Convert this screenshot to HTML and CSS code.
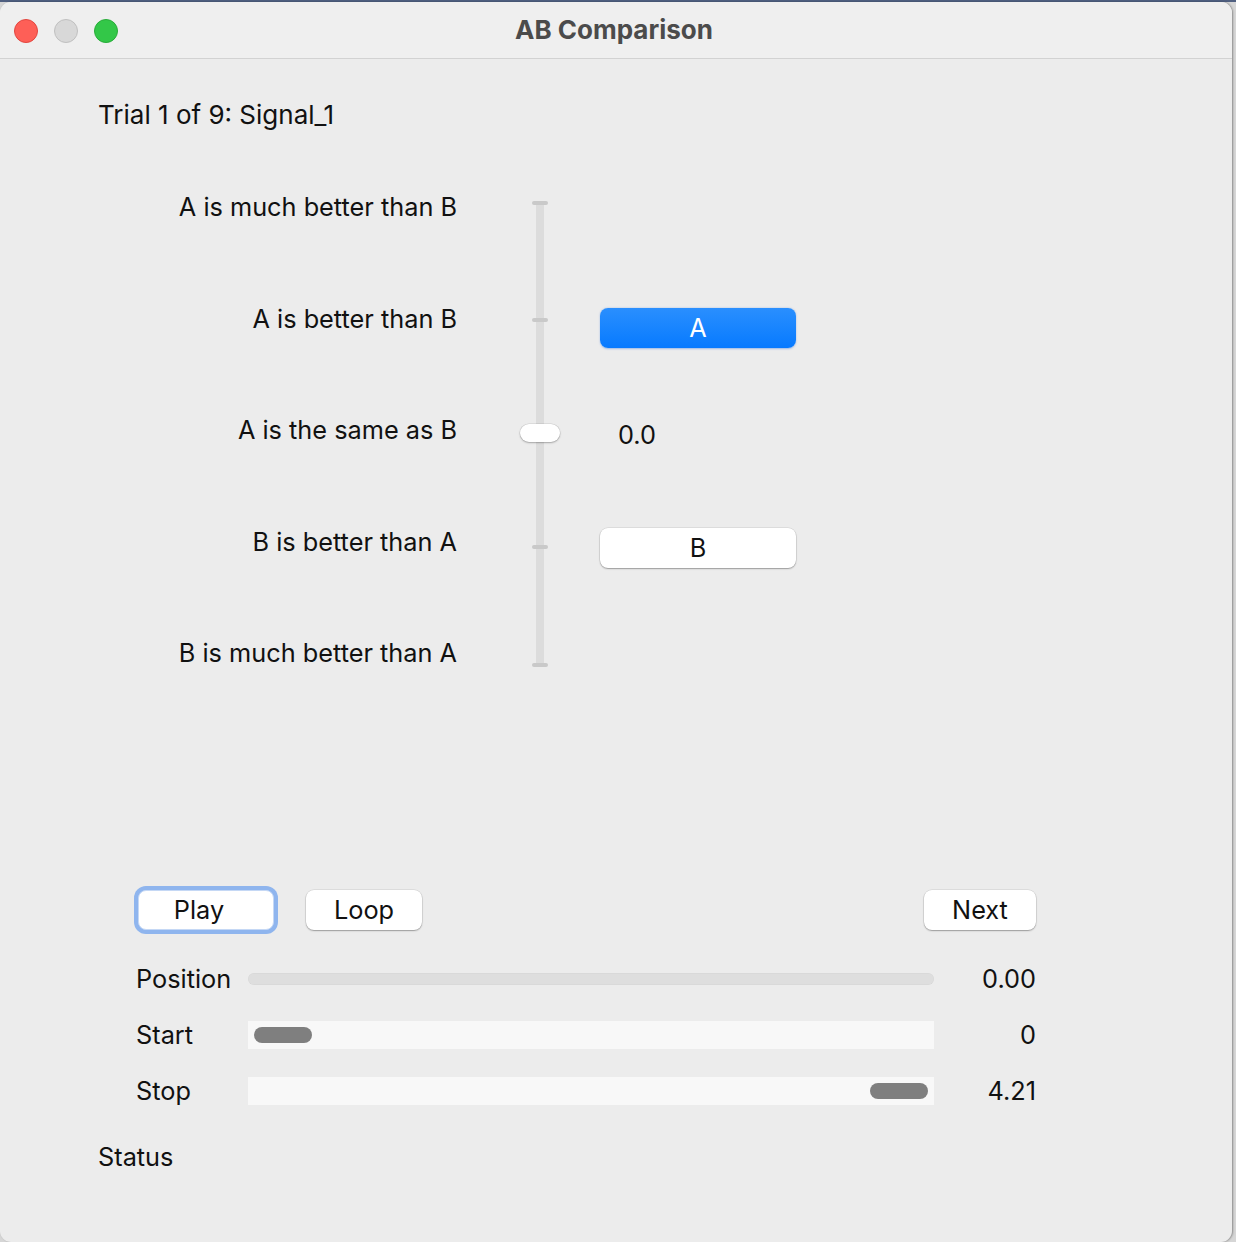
FILE: index.html
```html
<!DOCTYPE html>
<html>
<head>
<meta charset="utf-8">
<link rel="stylesheet" href="styles.css">
</head>
<body>
<div class="window">
  <div class="titlebar">
    <div class="lights">
      <span class="light red"></span>
      <span class="light gray"></span>
      <span class="light green"></span>
    </div>
    <div class="title">AB Comparison</div>
  </div>
  <div class="content">
    <div class="trial">Trial 1 of 9: Signal_1</div>
    <div class="scale">
      <div class="labels">
        <div class="label">A is much better than B</div>
        <div class="label">A is better than B</div>
        <div class="label">A is the same as B</div>
        <div class="label">B is better than A</div>
        <div class="label">B is much better than A</div>
      </div>
      <div class="vslider">
        <div class="track"></div>
        <span class="tick t0"></span>
        <span class="tick t1"></span>
        <span class="tick t2"></span>
        <span class="tick t3"></span>
        <span class="tick t4"></span>
        <span class="thumb"></span>
      </div>
      <div class="choices">
        <button class="btn btn-a">A</button>
        <div class="value">0.0</div>
        <button class="btn btn-b">B</button>
      </div>
    </div>
    <div class="controls">
      <div class="buttons">
        <div class="focus"><button class="btn small play">Play</button></div>
        <button class="btn small loop">Loop</button>
        <span class="spacer"></span>
        <button class="btn small next">Next</button>
      </div>
      <div class="sliders">
        <div class="slabel">Position</div>
        <div class="strack pos"></div>
        <div class="sval">0.00</div>

        <div class="slabel">Start</div>
        <div class="strack box"><span class="knob left"></span></div>
        <div class="sval">0</div>

        <div class="slabel">Stop</div>
        <div class="strack box end"><span class="knob right"></span></div>
        <div class="sval">4.21</div>
      </div>
    </div>
    <div class="status">Status</div>
  </div>
</div>
</body>
</html>
```
FILE: styles.css
```css
html, body {
  margin: 0;
  padding: 0;
}
body {
  width: 1236px;
  height: 1242px;
  overflow: hidden;
  background: linear-gradient(#4f5f80 0, #4f5f80 2px, #d6d6d6 2px);
  font-family: Inter, "Noto Sans", "Liberation Sans", sans-serif;
  color: #111;
}
.window {
  margin-top: 2px;
  width: 1232px;
  height: 1240px;
  background: #ececec;
  border-radius: 11px;
  box-shadow: 1px 0 2px rgba(0,0,0,0.35);
  overflow: hidden;
  display: flex;
  flex-direction: column;
}
.titlebar {
  height: 56px;
  flex: none;
  background: #efefef;
  border-bottom: 1px solid #d2d2d2;
  display: flex;
  align-items: center;
  position: relative;
}
.lights {
  display: flex;
  gap: 16px;
  padding-left: 14px;
  padding-top: 1px;
}
.light {
  width: 22px;
  height: 22px;
  border-radius: 50%;
  border: 1px solid transparent;
}
.light.red { background: #fe5f57; border-color: #e2463f; }
.light.gray { background: #d8d8d8; border-color: #c0c0c0; }
.light.green { background: #33c748; border-color: #28ac39; }
.title {
  position: absolute;
  left: 0;
  right: 0;
  top: 0;
  bottom: 0;
  display: flex;
  align-items: center;
  justify-content: center;
  font-weight: 700;
  font-size: 26px;
  color: #4b4b4b;
  padding-bottom: 2px;
  padding-right: 4px;
  pointer-events: none;
}
.content {
  padding-left: 98px;
  display: flex;
  flex-direction: column;
}
.trial {
  margin-top: 41px;
  font-size: 26px;
  line-height: 30px;
}
.scale {
  display: flex;
  align-items: flex-start;
  margin-top: 62px;
}
.labels {
  width: 359px;
  display: flex;
  flex-direction: column;
  gap: 81.5px;
  text-align: right;
  font-size: 25.3px;
}
.label {
  line-height: 30px;
}
.vslider {
  position: relative;
  width: 40px;
  margin-left: 63px;
  margin-top: 10px;
  height: 464px;
}
.track {
  margin: 0 auto;
  width: 8px;
  height: 100%;
  background: #dcdcdc;
}
.tick {
  position: absolute;
  left: 12px;
  width: 16px;
  height: 4px;
  border-radius: 2px;
  background: #c9c9c9;
}
.t0 { top: -1px; }
.t1 { top: 116px; }
.t2 { top: 230px; }
.t3 { top: 343px; }
.t4 { top: 461px; }
.thumb {
  position: absolute;
  left: 0;
  top: 222px;
  width: 40px;
  height: 18px;
  border-radius: 9px;
  background: #fff;
  box-shadow: 0 0 0 0.5px rgba(0,0,0,0.12), 0 1px 2px rgba(0,0,0,0.25);
}
.choices {
  margin-left: 40px;
  margin-top: 116px;
  width: 196px;
  display: flex;
  flex-direction: column;
}
.btn {
  font-family: inherit;
  font-size: 25.3px;
  color: #111;
  border: none;
  background: #fff;
  border-radius: 8px;
  box-shadow: 0 0 0 0.5px rgba(0,0,0,0.12), 0 1px 1.5px rgba(0,0,0,0.3);
  padding: 0;
  height: 40px;
  line-height: 40px;
  text-align: center;
}
.btn-a {
  width: 196px;
  color: #fff;
  background: linear-gradient(#2a8ffe, #077aff);
  box-shadow: 0 0.5px 2px rgba(0,90,220,0.35);
}
.value {
  margin-top: 72px;
  margin-left: 18px;
  font-size: 25.3px;
  line-height: 30px;
}
.btn-b {
  width: 196px;
  margin-top: 78px;
}
.controls {
  margin-left: 36px;
  margin-top: 218px;
  width: 902px;
  display: flex;
  flex-direction: column;
}
.buttons {
  display: flex;
  align-items: center;
  height: 48px;
}
.focus {
  padding: 4px;
  border-radius: 12px;
  background: #8fb5ee;
  display: flex;
}
.focus .btn {
  border: 1px solid #c5d8f5;
  box-shadow: none;
}
.play { width: 136px; height: 40px; line-height: 36px; padding-right: 14px; }
.loop { width: 116px; margin-left: 28px; }
.next { width: 112px; }
.spacer { flex: 1; }
.sliders {
  margin-top: 17px;
  display: grid;
  grid-template-columns: 114px 686px 1fr;
  grid-auto-rows: 56px;
  align-items: center;
  font-size: 25.3px;
}
.slabel {
  line-height: 30px;
  padding-left: 2px;
}
.sval {
  text-align: right;
  line-height: 30px;
}
.strack.pos {
  height: 12px;
  border-radius: 6px;
  background: #dedede;
  box-shadow: inset 0 0 0 0.5px rgba(0,0,0,0.04);
}
.strack.box {
  height: 28px;
  background: #f8f8f8;
  display: flex;
  align-items: center;
  padding: 0 6px;
}
.strack.box.end {
  justify-content: flex-end;
}
.knob {
  width: 58px;
  height: 16px;
  border-radius: 8px;
  background: #7f7f7f;
}
.status {
  margin-top: 23px;
  font-size: 25.3px;
  line-height: 30px;
}
```
